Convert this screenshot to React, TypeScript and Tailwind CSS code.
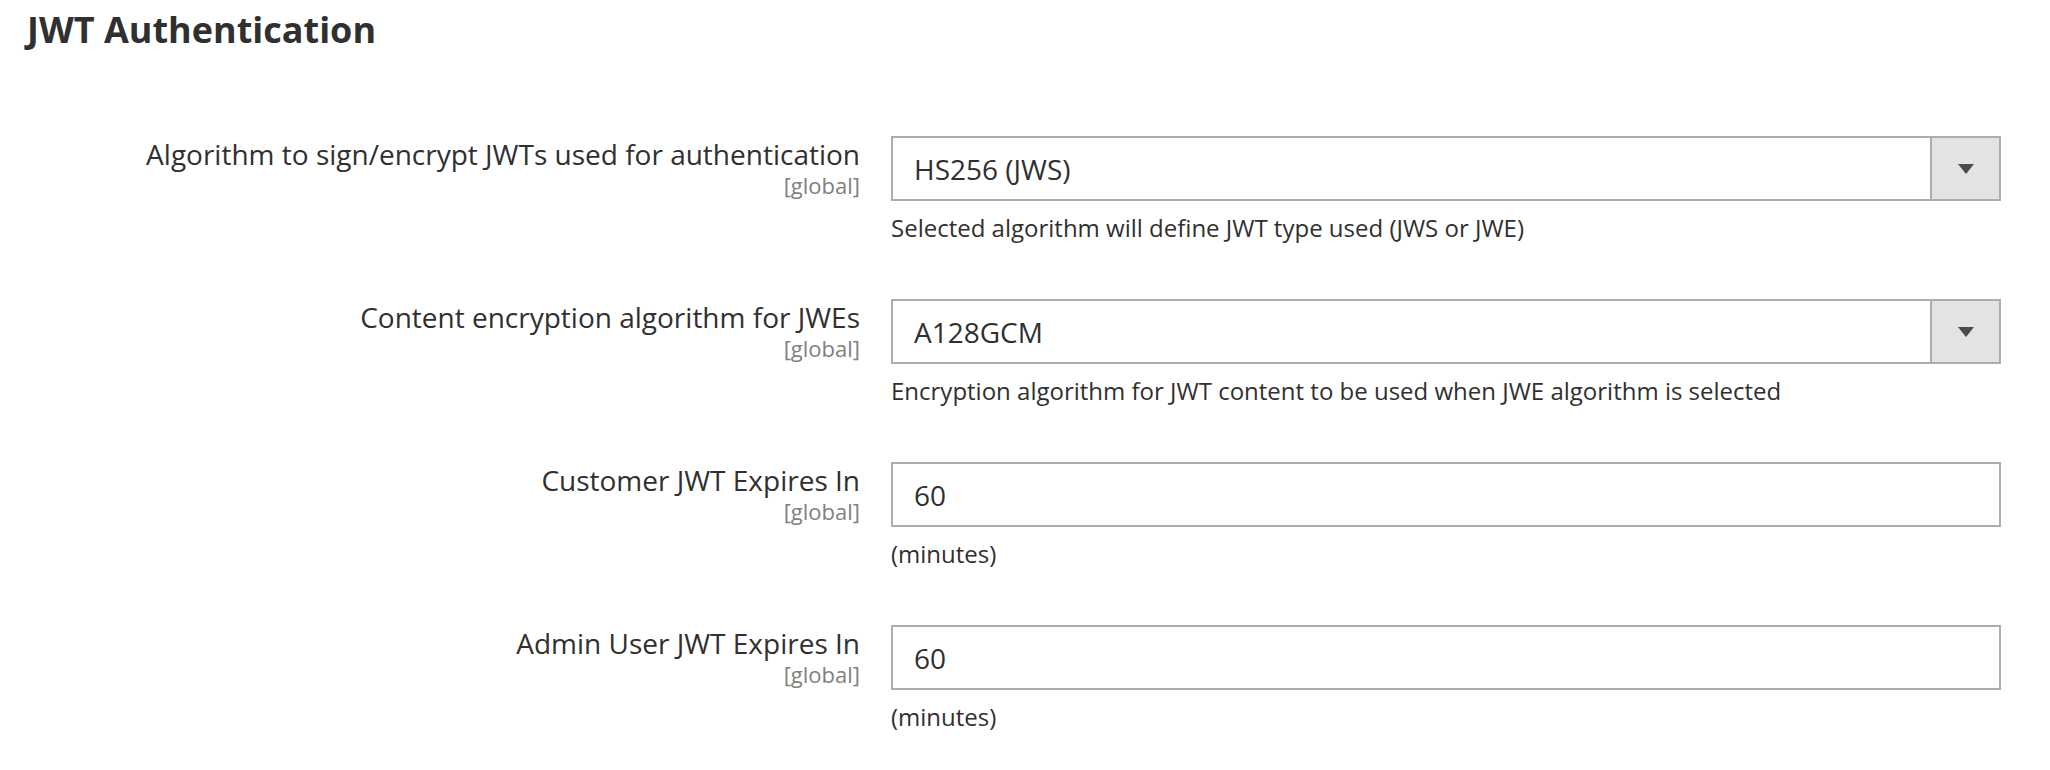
import React from "react";

type Field = {
  label: string;
  value: string;
  note: string;
  select?: boolean;
};

const FIELDS: Field[] = [
  {
    label: "Algorithm to sign/encrypt JWTs used for authentication",
    value: "HS256 (JWS)",
    note: "Selected algorithm will define JWT type used (JWS or JWE)",
    select: true,
  },
  {
    label: "Content encryption algorithm for JWEs",
    value: "A128GCM",
    note: "Encryption algorithm for JWT content to be used when JWE algorithm is selected",
    select: true,
  },
  { label: "Customer JWT Expires In", value: "60", note: "(minutes)" },
  { label: "Admin User JWT Expires In", value: "60", note: "(minutes)" },
];

function Row({ f }: { f: Field }) {
  return (
    <div className="flex h-[163px]">
      <div className="w-[860px] shrink-0 text-right">
        <div className="text-[28px] leading-[36px] text-[#303030]">{f.label}</div>
        <div className="text-[22px] leading-[26px] text-[#808080]">[global]</div>
      </div>
      <div className="ml-[31px] w-[1110px]">
        <div className="flex h-[65px] border-2 border-[#adadad] bg-white">
          <div className="flex flex-1 items-center pl-[21px] text-[28px] text-[#303030]">{f.value}</div>
          {f.select && (
            <div className="flex w-[69px] items-center justify-center border-l-2 border-[#adadad] bg-[#e3e3e3]">
              <svg width="16" height="10" viewBox="0 0 16 10">
                <path d="M0 0H16L8 10Z" fill="#514943" />
              </svg>
            </div>
          )}
        </div>
        <div className="mt-[9px] text-[24px] leading-[36px] text-[#303030]">{f.note}</div>
      </div>
    </div>
  );
}

export default function App() {
  return (
    <main
      className="h-[770px] w-[2050px] overflow-hidden bg-white"
      style={{ fontFamily: '"Open Sans", "Noto Sans", sans-serif' }}
    >
      <h1 className="pl-[27px] pt-[12px] text-[36px] font-bold leading-[36px] text-[#303030]">
        JWT Authentication
      </h1>
      <div className="mt-[88px] flex flex-col">
        {FIELDS.map((f) => (
          <Row key={f.label} f={f} />
        ))}
      </div>
    </main>
  );
}
